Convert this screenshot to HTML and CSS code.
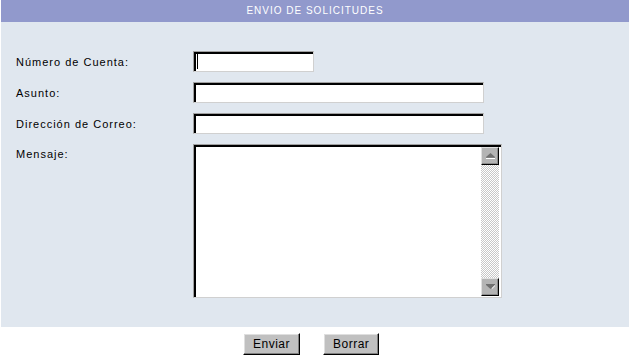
FILE: index.html
```html
<!DOCTYPE html>
<html lang="es">
<head>
<meta charset="utf-8">
<title>Envio de solicitudes</title>
<link rel="stylesheet" href="styles.css">
</head>
<body>
<div class="panel">
  <div class="title">ENVIO DE SOLICITUDES</div>
  <div class="panel-body">
    <form class="form">
      <label class="lbl">Número de Cuenta:</label>
      <span class="field"><input class="inp short" type="text"><span class="caret"></span></span>
      <label class="lbl">Asunto:</label>
      <input class="inp long" type="text">
      <label class="lbl">Dirección de Correo:</label>
      <input class="inp long" type="text">
      <label class="lbl top">Mensaje:</label>
      <div class="tawrap">
        <textarea class="ta"></textarea>
        <div class="sb">
          <div class="sbbtn">
            <svg width="9" height="6" viewBox="0 0 9 6"><path d="M4.5 0 L9 4 L0 4 Z" fill="#707070"/><rect x="0" y="4" width="9" height="1" fill="#808080"/><rect x="0" y="5" width="9" height="1" fill="#ffffff"/></svg>
          </div>
          <div class="track"></div>
          <div class="sbbtn">
            <svg width="9" height="6" viewBox="0 0 9 6"><rect x="0" y="0" width="9" height="1" fill="#707070"/><path d="M0 1 L9 1 L4.5 5 Z" fill="#707070"/><path d="M6 4 L9 1 L9 2 L6 5 Z" fill="#ffffff"/></svg>
          </div>
        </div>
      </div>
    </form>
  </div>
</div>
<div class="actions">
  <button class="btn" type="button">Enviar</button>
  <button class="btn" type="button">Borrar</button>
</div>
</body>
</html>
```
FILE: styles.css
```css
html, body {
  margin: 0;
  padding: 0;
  background: #ffffff;
}
body {
  font-family: "Liberation Sans", Arial, sans-serif;
  font-size: 11px;
  color: #000;
}
.panel {
  margin-left: 1px;
  width: 628px;
}
.title {
  height: 22px;
  line-height: 22px;
  background: #9199cc;
  color: #ffffff;
  text-align: center;
  font-size: 10px;
  letter-spacing: 1px;
}
.panel-body {
  background: #e0e7ef;
  height: 305px;
  box-sizing: border-box;
  padding: 29px 0 0 15px;
}
.form {
  display: grid;
  grid-template-columns: 177px auto;
  row-gap: 10px;
  align-items: center;
  justify-items: start;
  margin: 0;
}
.lbl {
  letter-spacing: 1px;
  padding-top: 1px;
}
.lbl.top {
  align-self: start;
  margin-top: 3px;
}
.field {
  position: relative;
  display: block;
}
.inp {
  display: block;
  box-sizing: border-box;
  height: 21px;
  margin: 0;
  padding: 0 3px;
  background: #fff;
  border: 1px solid;
  border-color: #a0a0a0 #d0d0d0 #d0d0d0 #a0a0a0;
  box-shadow: inset 2px 2px 0 #000;
  outline: none;
  font: 11px "Liberation Sans", Arial, sans-serif;
}
.inp.short { width: 121px; }
.inp.long { width: 291px; }
.caret {
  position: absolute;
  left: 4px;
  top: 3px;
  width: 1px;
  height: 15px;
  background: #000;
}
.tawrap {
  display: flex;
  box-sizing: border-box;
  width: 309px;
  height: 154px;
  border: 1px solid;
  border-color: #a0a0a0 #d0d0d0 #d0d0d0 #a0a0a0;
  box-shadow: inset 2px 2px 0 #000;
  background: #fff;
  padding: 2px 2px 1px 2px;
}
.ta {
  flex: 1;
  border: 0;
  margin: 0;
  padding: 2px;
  resize: none;
  outline: none;
  background: #fff;
  font: 11px "Liberation Sans", Arial, sans-serif;
}
.sb {
  width: 18px;
  display: flex;
  flex-direction: column;
}
.sbbtn {
  box-sizing: border-box;
  height: 18px;
  background: #b4b4b4;
  border: 1px solid;
  border-color: #e0e0e0 #000 #000 #e0e0e0;
  box-shadow: inset -1px -1px 0 #8a8a8a;
  display: flex;
  align-items: center;
  justify-content: center;
}
.track {
  flex: 1;
  background: repeating-conic-gradient(#c8c8c8 0 25%, #ffffff 0 50%) 0 0 / 2px 2px;
}
.actions {
  display: flex;
  gap: 23px;
  padding: 6px 0 0 243px;
}
.btn {
  box-sizing: border-box;
  height: 22px;
  padding: 0 9px;
  margin: 0;
  background: #c0c0c0;
  border: 1px solid;
  border-color: #ffffff #000 #000 #ffffff;
  box-shadow: inset -1px -1px 0 #808080, inset 1px 1px 0 #dfdfdf;
  font: 12px "Liberation Sans", Arial, sans-serif;
  letter-spacing: 0.5px;
  color: #000;
}
```
